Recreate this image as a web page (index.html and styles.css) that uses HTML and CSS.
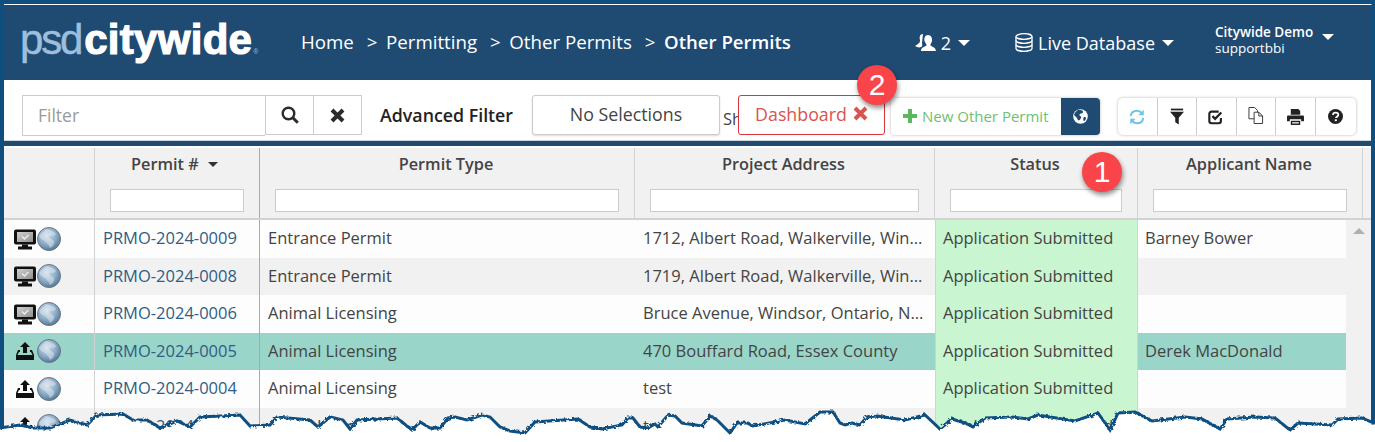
FILE: index.html
```html
<!DOCTYPE html>
<html lang="en">
<head>
    <meta charset="UTF-8">
    <title>Other Permits</title>
    <link rel="stylesheet" href="styles.css">
</head>
<body>
    <svg class="sprite" aria-hidden="true">
        <defs>
            <radialGradient id="globe-fill" cx="0.42" cy="0.35" r="0.72">
                <stop offset="0" stop-color="#d3e2ee"/>
                <stop offset="0.55" stop-color="#8aaac6"/>
                <stop offset="1" stop-color="#4c6d89"/>
            </radialGradient>
            <linearGradient id="screen-fill" x1="0" y1="0" x2="1" y2="1">
                <stop offset="0" stop-color="#d0d0d0"/>
                <stop offset="1" stop-color="#8f8f8f"/>
            </linearGradient>
            <filter id="rough" x="-10" y="400" width="1395" height="42" filterUnits="userSpaceOnUse">
                <feTurbulence type="fractalNoise" baseFrequency="0.35" numOctaves="2" seed="4"/>
                <feDisplacementMap in="SourceGraphic" scale="4"/>
            </filter>
            <symbol id="i-globe" viewBox="0 0 24 24">
                <circle cx="12" cy="12" r="11.500" fill="url(#globe-fill)" stroke="#66798a" stroke-width="1"/>
                <path d="M9 2c4 1 8 2 10 5-2 3-5 1-7 2-1 2 3 3 5 5 1 3-2 6-4 7-1-3-3-5-5-7-2-1-5-2-6-5 2-3 5-4 7-7z" fill="#e4eaef" opacity=".5"/>
            </symbol>
            <symbol id="i-monitor" viewBox="0 0 22 21">
                <rect x="0" y="1" width="22" height="15" rx="2" fill="#111"/>
                <rect x="3" y="3.500" width="16" height="10" fill="url(#screen-fill)"/>
                <path d="M8 8l2.500 2.500 4-4" fill="none" stroke="#eee" stroke-width="1.300"/>
                <path d="M8 16h6v2h4v3H4v-3h4z" fill="#111"/>
            </symbol>
            <symbol id="i-upload" viewBox="-1 -1 22 22">
                <path d="M10 1l5 5h-3v6H8V6H5z" fill="#111"/>
                <path d="M5 9H3l-2 5v5h18v-5l-2-5h-2v2h1l1.500 3h-15L4 11h1z" fill="#111"/>
            </symbol>
        </defs>
    </svg>

    <div class="page">
        <div class="app">
            <header class="topbar">
                <div class="logo"><span class="logo-psd">psd</span><span class="logo-city">citywide</span><span class="logo-reg">®</span></div>
                <nav class="crumbs">
                    <span>Home</span>
                    <span class="sep">&gt;</span>
                    <span>Permitting</span>
                    <span class="sep">&gt;</span>
                    <span>Other Permits</span>
                    <span class="sep">&gt;</span>
                    <span class="current">Other Permits</span>
                </nav>
                <div class="top-right">
                    <div class="top-item users">
                        <svg width="21" height="20" viewBox="0 0 21 20"><path d="M8 1c-3 0-4 3-3 6 .5 2-1 3-2 4l-3 2c2 1 4 2 6 1 2 0 1-3 1-4z" fill="#fff"/><path d="M13 2c3 0 4.500 3 4 6-.3 2-2 3-1.500 4.500 1 1 5 1.500 5.500 5.500H6c0-4 4.500-4.500 5.500-5.500C12 11 10 10 9.500 8 9 5 10 2 13 2z" fill="#fff"/></svg>
                        <span>2</span>
                        <i class="caret"></i>
                    </div>
                    <div class="top-item database">
                        <svg width="18" height="19" viewBox="0 0 18 19" fill="none" stroke="#fff" stroke-width="1.300"><ellipse cx="9" cy="3.500" rx="8" ry="2.800"/><path d="M1 3.500v12c0 1.500 3.500 2.800 8 2.800s8-1.300 8-2.800v-12"/><path d="M1 7.500c0 1.500 3.500 2.800 8 2.800s8-1.300 8-2.800M1 11.500c0 1.500 3.500 2.800 8 2.800s8-1.300 8-2.800"/></svg>
                        <span>Live Database</span>
                        <i class="caret"></i>
                    </div>
                    <div class="top-item account">
                        <div class="account-name">
                            <strong>Citywide Demo</strong>
                            <span>supportbbi</span>
                        </div>
                        <i class="caret"></i>
                    </div>
                </div>
            </header>

            <div class="toolbar">
                <div class="filter-box">
                    <div class="filter-input">Filter</div>
                    <button class="filter-btn search-btn">
                        <svg width="18" height="18" viewBox="0 0 18 18" fill="none" stroke="#2b2b2b"><circle cx="7.500" cy="7.500" r="5.800" stroke-width="2.400"/><path d="M11.800 11.800l5 5" stroke-width="3"/></svg>
                    </button>
                    <button class="filter-btn clear-btn">
                        <svg width="15" height="15" viewBox="0 0 15 15"><path d="M2 2l11 11M13 2L2 13" stroke="#2b2b2b" stroke-width="4"/></svg>
                    </button>
                </div>
                <span class="advanced">Advanced Filter</span>
                <button class="selections">No Selections</button>
                <span class="cut-label">Sh</span>
                <button class="dashboard">Dashboard
                    <svg width="15" height="15" viewBox="0 0 15 15"><path d="M2 2l11 11M13 2L2 13" stroke="#d9534f" stroke-width="4"/></svg>
                </button>
                <div class="new-group">
                    <button class="new-btn">
                        <svg width="14" height="14" viewBox="0 0 14 14"><path d="M7 0v14M0 7h14" stroke="#5cb85c" stroke-width="4"/></svg>
                        New Other Permit
                    </button>
                    <button class="globe-btn">
                        <svg width="15" height="15" viewBox="0 0 15 15"><circle cx="7.500" cy="7.500" r="7.300" fill="#fff"/><path d="M5 1c2 0 5 0 5 2S7 4 6.500 5.500 9 7 8 9s-2 3-3 2-1-3-3-4 0-4 3-6zM11 8c1 0 2 0 2 1s-1 3-2 3-1-3 0-4z" fill="#1f4a72"/></svg>
                    </button>
                </div>
                <div class="tools">
                    <button class="tool">
                        <svg width="18" height="18" viewBox="0 0 20 20" fill="none" stroke="#6cc5e8" stroke-width="2.200"><path d="M3 9c.5-4 3.500-6 7-6 2.500 0 4 1 5.500 2.500"/><path d="M17 11c-.5 4-3.500 6-7 6-2.500 0-4-1-5.500-2.500"/><path d="M17.500 2v6h-6z" fill="#6cc5e8" stroke="none"/><path d="M2.500 18v-6h6z" fill="#6cc5e8" stroke="none"/></svg>
                    </button>
                    <button class="tool">
                        <svg width="14" height="17" viewBox="0 0 16 18" fill="#222"><rect x="1" y="0" width="14" height="2"/><path d="M0 3.500h16l-6 7V18l-4-2.500v-5z"/></svg>
                    </button>
                    <button class="tool">
                        <svg width="16" height="16" viewBox="0 0 18 18" fill="none" stroke="#222"><path d="M14.500 10v3.500a2.500 2.500 0 0 1-2.500 2.500H4a2.500 2.500 0 0 1-2.500-2.500V5.500A2.500 2.500 0 0 1 4 3h8" stroke-width="2.400"/><path d="M5 8l3 3 7-7" stroke-width="2.600"/></svg>
                    </button>
                    <button class="tool tool-copy">
                        <svg width="16" height="17" viewBox="0 0 17 18" fill="#fff" stroke="#333"><path d="M1 .5h6l3 3v9H1z"/><path d="M6.500 5.500h5l4 4v8h-9z"/><path d="M11.500 5.500v4h4" fill="none"/></svg>
                    </button>
                    <button class="tool">
                        <svg width="17" height="16" viewBox="0 0 18 17" fill="#222"><path d="M4 0h8l2 2v4H4z"/><path d="M1 7h16a1 1 0 0 1 1 1v5h-3v-2H3v2H0V8a1 1 0 0 1 1-1z"/><path d="M4 12.500h10V17H4zM5.500 14v1.500h7V14z"/></svg>
                    </button>
                    <button class="tool">
                        <svg width="15" height="15" viewBox="0 0 16 16"><circle cx="8" cy="8" r="8" fill="#222"/><path d="M5.200 6.200C5.400 4.600 6.600 3.800 8 3.800c1.700 0 3 1 3 2.400 0 2-2.500 2-2.500 3.500" fill="none" stroke="#fff" stroke-width="1.900"/><rect x="7.200" y="11" width="2.200" height="2" fill="#fff"/></svg>
                    </button>
                </div>
            </div>

            <div class="toolbar-rule"></div>

            <div class="grid">
                <div class="grid-head">
                    <div class="head-cell"></div>
                    <div class="head-cell strong-line">
                        <span class="head-title sorted">Permit # <i class="sort-caret"></i></span>
                        <div class="head-filter"></div>
                    </div>
                    <div class="head-cell">
                        <span class="head-title">Permit Type</span>
                        <div class="head-filter"></div>
                    </div>
                    <div class="head-cell">
                        <span class="head-title">Project Address</span>
                        <div class="head-filter"></div>
                    </div>
                    <div class="head-cell">
                        <span class="head-title">Status</span>
                        <div class="head-filter"></div>
                    </div>
                    <div class="head-cell">
                        <span class="head-title">Applicant Name</span>
                        <div class="head-filter"></div>
                    </div>
                    <div class="head-end"></div>
                </div>

                <div class="grid-row">
                    <div class="cell icons"><svg class="ic-main"><use href="#i-monitor"/></svg><svg class="ic-globe"><use href="#i-globe"/></svg></div>
                    <div class="cell link">PRMO-2024-0009</div>
                    <div class="cell">Entrance Permit</div>
                    <div class="cell">1712, Albert Road, Walkerville, Windsor, Ontario</div>
                    <div class="cell status">Application Submitted</div>
                    <div class="cell applicant">Barney Bower</div>
                    <div class="scroll-cell"><i class="scroll-up"></i></div>
                </div>
                <div class="grid-row alt">
                    <div class="cell icons"><svg class="ic-main"><use href="#i-monitor"/></svg><svg class="ic-globe"><use href="#i-globe"/></svg></div>
                    <div class="cell link">PRMO-2024-0008</div>
                    <div class="cell">Entrance Permit</div>
                    <div class="cell">1719, Albert Road, Walkerville, Windsor, Ontario</div>
                    <div class="cell status">Application Submitted</div>
                    <div class="cell applicant"></div>
                    <div class="scroll-cell"></div>
                </div>
                <div class="grid-row">
                    <div class="cell icons"><svg class="ic-main"><use href="#i-monitor"/></svg><svg class="ic-globe"><use href="#i-globe"/></svg></div>
                    <div class="cell link">PRMO-2024-0006</div>
                    <div class="cell">Animal Licensing</div>
                    <div class="cell">Bruce Avenue, Windsor, Ontario, N8X 1X1, Canada</div>
                    <div class="cell status">Application Submitted</div>
                    <div class="cell applicant"></div>
                    <div class="scroll-cell"></div>
                </div>
                <div class="grid-row selected">
                    <div class="cell icons"><svg class="ic-main"><use href="#i-upload"/></svg><svg class="ic-globe"><use href="#i-globe"/></svg></div>
                    <div class="cell link">PRMO-2024-0005</div>
                    <div class="cell">Animal Licensing</div>
                    <div class="cell">470 Bouffard Road, Essex County</div>
                    <div class="cell status">Application Submitted</div>
                    <div class="cell applicant">Derek MacDonald</div>
                    <div class="scroll-cell"></div>
                </div>
                <div class="grid-row">
                    <div class="cell icons"><svg class="ic-main"><use href="#i-upload"/></svg><svg class="ic-globe"><use href="#i-globe"/></svg></div>
                    <div class="cell link">PRMO-2024-0004</div>
                    <div class="cell">Animal Licensing</div>
                    <div class="cell">test</div>
                    <div class="cell status">Application Submitted</div>
                    <div class="cell applicant"></div>
                    <div class="scroll-cell"></div>
                </div>
                <div class="grid-row alt">
                    <div class="cell icons"><svg class="ic-main"><use href="#i-upload"/></svg><svg class="ic-globe"><use href="#i-globe"/></svg></div>
                    <div class="cell link">PRMO-2024-0003</div>
                    <div class="cell">Animal Licensing</div>
                    <div class="cell">test</div>
                    <div class="cell status">Application Submitted</div>
                    <div class="cell applicant"></div>
                    <div class="scroll-cell"></div>
                </div>
            </div>
        </div>

        <div class="badge badge-one">1</div>
        <div class="badge badge-two">2</div>

        <svg class="torn" width="1375" height="442" viewBox="0 0 1375 442">
            <g filter="url(#rough)">
                <polygon fill="#fff" points="-8,429 20,425 33,428 50,428 70,420 87,425 97,415 123,414 133,420 147,420 160,428 177,421 190,427 200,417 240,415 250,426 270,425 277,417 310,420 318,427 330,417 343,420 350,429 357,420 397,418 412,430 420,422 430,428 440,428 448,418 455,417 467,420 482,415 490,417 500,427 510,431 525,433 535,422 578,419 590,427 602,429 622,425 628,418 633,418 640,427 648,428 655,424 658,427 668,415 675,416 682,423 702,426 710,416 717,420 730,433 737,423 747,423 753,426 785,420 805,424 820,412 833,412 840,423 845,425 852,423 860,425 867,417 877,416 905,420 925,415 940,429 952,419 965,423 973,427 985,418 1012,417 1028,419 1038,415 1075,421 1098,413 1110,430 1118,413 1135,412 1152,421 1185,417 1202,419 1220,429 1227,419 1255,417 1275,418 1290,430 1298,423 1332,425 1338,419 1362,418 1383,427 1383,450 -8,450"/>
                <polyline fill="none" stroke="#0f4f80" stroke-width="3" points="-8,429 20,425 33,428 50,428 70,420 87,425 97,415 123,414 133,420 147,420 160,428 177,421 190,427 200,417 240,415 250,426 270,425 277,417 310,420 318,427 330,417 343,420 350,429 357,420 397,418 412,430 420,422 430,428 440,428 448,418 455,417 467,420 482,415 490,417 500,427 510,431 525,433 535,422 578,419 590,427 602,429 622,425 628,418 633,418 640,427 648,428 655,424 658,427 668,415 675,416 682,423 702,426 710,416 717,420 730,433 737,423 747,423 753,426 785,420 805,424 820,412 833,412 840,423 845,425 852,423 860,425 867,417 877,416 905,420 925,415 940,429 952,419 965,423 973,427 985,418 1012,417 1028,419 1038,415 1075,421 1098,413 1110,430 1118,413 1135,412 1152,421 1185,417 1202,419 1220,429 1227,419 1255,417 1275,418 1290,430 1298,423 1332,425 1338,419 1362,418 1383,427"/>
            </g>
        </svg>
    </div>
</body>
</html>
```

FILE: styles.css
```css
* {
    box-sizing: border-box;
}
body {
    margin: 0;
    font-family: "Open Sans", sans-serif;
    color: #444;
}
button {
    font-family: inherit;
    background: #fff;
    cursor: pointer;
}
.sprite {
    position: absolute;
    width: 0;
    height: 0;
}
.page {
    position: relative;
    width: 1375px;
    height: 442px;
    padding: 4px 3px 0 4px;
    overflow: hidden;
    background-color: #0f4f80;
}
.app {
    width: 1368px;
    height: 438px;
    background-color: #fff;
    border-top: 1px solid #fff;
    border-right: 1px solid #5a3a30;
}

/* top bar */
.topbar {
    display: flex;
    align-items: center;
    height: 75px;
    padding-left: 18px;
    color: #fff;
    background-color: #1f4a72;
}
.logo {
    display: flex;
    align-items: baseline;
    width: 279px;
    font-family: "Liberation Sans", sans-serif;
    font-size: 42px;
    margin-top: -5px;
    white-space: nowrap;
}
.logo-psd {
    margin-left: -2px;
    color: #9dbfdc;
    letter-spacing: -2.200px;
    -webkit-text-stroke: 0.5px #9dbfdc;
}
.logo-city {
    margin-left: 3px;
    font-weight: bold;
    letter-spacing: 0.300px;
    color: #fff;
    -webkit-text-stroke: 1.200px #fff;
}
.logo-reg {
    margin-left: 1px;
    font-size: 7px;
    color: #9dbfdc;
}
.crumbs {
    display: flex;
    gap: 12px;
    margin-top: -2px;
    font-size: 18.700px;
    white-space: nowrap;
}
.crumbs .sep {
    margin: 0 -3.500px 0 1px;
}
.crumbs .current {
    font-weight: 600;
    font-size: 18.600px;
}
.top-right {
    display: flex;
    align-items: center;
    margin-left: auto;
}
.top-item {
    display: flex;
    align-items: center;
    font-size: 18px;
}
.caret {
    display: block;
    width: 0;
    height: 0;
    border-left: 6px solid transparent;
    border-right: 6px solid transparent;
    border-top: 6px solid #fff;
}
.users {
    gap: 5px;
    margin-right: 45px;
}
.users .caret {
    margin-left: 2px;
}
.database {
    gap: 5px;
    margin-right: 41px;
}
.database .caret {
    margin-left: 2px;
}
.account {
    gap: 9px;
    width: 156px;
}
.account .caret {
    margin-top: -12px;
}
.account-name {
    display: flex;
    flex-direction: column;
    margin-top: -6px;
    font-size: 13.500px;
    line-height: 16px;
}
.account-name strong {
    font-weight: 600;
}

/* toolbar */
.toolbar {
    display: flex;
    align-items: flex-start;
    height: 60px;
    padding: 15px 0 0 18px;
    background-color: #fff;
}
.filter-box {
    display: flex;
}
.filter-input {
    width: 243px;
    height: 41px;
    padding: 7px 15px;
    font-size: 17.500px;
    color: #9a9a9a;
    border: 1px solid #ccc;
    border-right: none;
}
.filter-btn {
    display: flex;
    align-items: center;
    justify-content: center;
    height: 40px;
    padding: 0;
    border: 1px solid #ccc;
}
.search-btn {
    width: 49px;
}
.clear-btn {
    width: 48px;
    border-left: none;
}
.advanced {
    margin-left: 18px;
    line-height: 40px;
    font-size: 17.800px;
    font-weight: 600;
    color: #222;
    width: 152px;
    white-space: nowrap;
}
.selections {
    width: 188px;
    height: 40px;
    padding: 0 0 3px;
    font-size: 17.800px;
    color: #444;
    border: 1px solid #ccc;
    border-radius: 3px;
    box-shadow: 0 1px 2px rgba(0, 0, 0, 0.15);
}
.cut-label {
    width: 18px;
    padding: 12px 0 0 3px;
    font-size: 16.500px;
    overflow: hidden;
}
.dashboard {
    display: flex;
    align-items: center;
    justify-content: center;
    gap: 6px;
    width: 147px;
    height: 40px;
    padding: 0 0 3px;
    font-size: 17.800px;
    color: #d9534f;
    border: 1px solid #d9343a;
    border-radius: 3px;
}
.new-group {
    display: flex;
    margin: 3px 0 0 6px;
    height: 37px;
    border-radius: 4px;
    box-shadow: 0 0 3px rgba(0, 0, 0, 0.3);
}
.new-btn {
    display: flex;
    align-items: center;
    gap: 5px;
    width: 170px;
    padding: 0 0 2px 12px;
    font-size: 15px;
    color: #6cbf73;
    border: none;
    border-radius: 4px 0 0 4px;
    white-space: nowrap;
}
.globe-btn {
    display: flex;
    align-items: center;
    justify-content: center;
    width: 39px;
    padding: 0;
    background-color: #1f4a72;
    border: none;
    border-radius: 0 4px 4px 0;
}
.tools {
    display: flex;
    margin: 3px 0 0 18px;
    height: 37px;
    border-radius: 5px;
    box-shadow: 0 0 3px rgba(0, 0, 0, 0.3);
}
.tool {
    display: flex;
    align-items: center;
    justify-content: center;
    width: 39.600px;
    padding: 0;
    background: transparent;
    border: none;
    border-right: 1px solid #ccc;
}
.tool:last-child {
    border-right: none;
}
.tool-copy {
    padding-bottom: 3px;
}
.toolbar-rule {
    height: 8px;
    border-top: 1px solid #cfd3d8;
    border-bottom: 2px solid #fff;
    background-color: #1f4a72;
}

/* permit grid */
.grid-head,
.grid-row {
    display: grid;
    width: 1367px;
}
.grid-head {
    grid-template-columns: 91px 165px 375px 300px 203px 225px 8px;
    height: 72px;
    background-color: #f1f1f1;
    border-bottom: 2px solid #d2d2d2;
}
.head-cell {
    display: flex;
    flex-direction: column;
    padding: 0 15px;
    border-right: 1px solid #d2d2d2;
}
.strong-line {
    border-right-color: #a9a9a9;
}
.head-title {
    display: block;
    height: 41px;
    padding-right: 2px;
    line-height: 33px;
    font-size: 16.300px;
    font-weight: 600;
    text-align: center;
    color: #444;
    white-space: nowrap;
}
.head-title.sorted {
    padding-right: 5px;
}
.sort-caret {
    display: inline-block;
    width: 0;
    height: 0;
    margin-left: 5px;
    vertical-align: 3px;
    border-left: 5.500px solid transparent;
    border-right: 5.500px solid transparent;
    border-top: 5.500px solid #333;
}
.head-filter {
    height: 23px;
    background-color: #fff;
    border: 1px solid #ccc;
}
.grid-row {
    grid-template-columns: 91px 165px 375px 300px 203px 208px 25px;
    height: 37.500px;
    background-color: #fdfdfd;
}
.grid-row.alt {
    background-color: #f1f1f1;
}
.grid-row.selected {
    background-color: #9ad5ca;
}
.cell {
    padding: 0 8px;
    line-height: 35px;
    font-size: 16.500px;
    color: #444;
    white-space: nowrap;
    overflow: hidden;
    text-overflow: ellipsis;
}
.icons {
    display: flex;
    align-items: center;
    padding: 0 0 0 10px;
    border-right: 1px solid #d2d2d2;
}
.ic-main {
    width: 22px;
    height: 22px;
}
.ic-globe {
    width: 24px;
    height: 24px;
    margin-left: 1px;
}
.link {
    color: #2f5d85;
    border-right: 1px solid #a9a9a9;
}
.status {
    padding-left: 7px;
    background-color: #c9f5d0;
    border-left: 1px solid #d2d2d2;
    border-right: 1px solid #d2d2d2;
}
.applicant {
    padding-left: 7px;
}
.scroll-cell {
    display: flex;
    justify-content: center;
    padding-top: 8px;
    background-color: #f1f1f1;
}
.scroll-up {
    display: block;
    width: 0;
    height: 0;
    border-left: 6px solid transparent;
    border-right: 6px solid transparent;
    border-bottom: 6px solid #b0b0b0;
}

/* callouts and torn edge */
.badge {
    position: absolute;
    width: 40px;
    height: 40px;
    font-size: 30px;
    line-height: 40px;
    text-align: center;
    color: #fff;
    font-family: "Liberation Sans", sans-serif;
    background-color: #f94449;
    border-radius: 50%;
    box-shadow: 1px 3px 5px rgba(0, 0, 0, 0.45);
}
.badge-one {
    left: 1082px;
    top: 152px;
}
.badge-two {
    left: 857px;
    top: 65px;
}
.torn {
    position: absolute;
    left: 0;
    top: 0;
    pointer-events: none;
}
```
